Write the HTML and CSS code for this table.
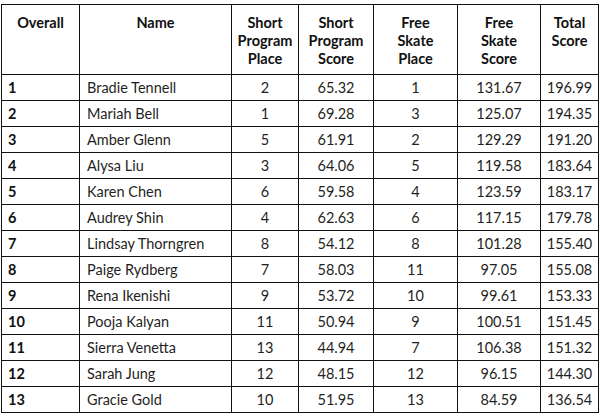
FILE: index.html
```html
<!DOCTYPE html>
<html>
<head>
<meta charset="utf-8">
<link rel="stylesheet" href="styles.css">
</head>
<body>
<table class="results">
  <colgroup>
    <col class="c1"><col class="c2"><col class="c3"><col class="c4"><col class="c5"><col class="c6"><col class="c7">
  </colgroup>
  <thead>
    <tr>
      <th>Overall</th>
      <th>Name</th>
      <th>Short<br>Program<br>Place</th>
      <th>Short<br>Program<br>Score</th>
      <th>Free<br>Skate<br>Place</th>
      <th>Free<br>Skate<br>Score</th>
      <th>Total<br>Score</th>
    </tr>
  </thead>
  <tbody>
    <tr><td class="rank">1</td><td class="name">Bradie Tennell</td><td>2</td><td>65.32</td><td>1</td><td>131.67</td><td>196.99</td></tr>
    <tr><td class="rank">2</td><td class="name">Mariah Bell</td><td>1</td><td>69.28</td><td>3</td><td>125.07</td><td>194.35</td></tr>
    <tr><td class="rank">3</td><td class="name">Amber Glenn</td><td>5</td><td>61.91</td><td>2</td><td>129.29</td><td>191.20</td></tr>
    <tr><td class="rank">4</td><td class="name">Alysa Liu</td><td>3</td><td>64.06</td><td>5</td><td>119.58</td><td>183.64</td></tr>
    <tr><td class="rank">5</td><td class="name">Karen Chen</td><td>6</td><td>59.58</td><td>4</td><td>123.59</td><td>183.17</td></tr>
    <tr><td class="rank">6</td><td class="name">Audrey Shin</td><td>4</td><td>62.63</td><td>6</td><td>117.15</td><td>179.78</td></tr>
    <tr><td class="rank">7</td><td class="name">Lindsay Thorngren</td><td>8</td><td>54.12</td><td>8</td><td>101.28</td><td>155.40</td></tr>
    <tr><td class="rank">8</td><td class="name">Paige Rydberg</td><td>7</td><td>58.03</td><td>11</td><td>97.05</td><td>155.08</td></tr>
    <tr><td class="rank">9</td><td class="name">Rena Ikenishi</td><td>9</td><td>53.72</td><td>10</td><td>99.61</td><td>153.33</td></tr>
    <tr><td class="rank">10</td><td class="name">Pooja Kalyan</td><td>11</td><td>50.94</td><td>9</td><td>100.51</td><td>151.45</td></tr>
    <tr><td class="rank">11</td><td class="name">Sierra Venetta</td><td>13</td><td>44.94</td><td>7</td><td>106.38</td><td>151.32</td></tr>
    <tr><td class="rank">12</td><td class="name">Sarah Jung</td><td>12</td><td>48.15</td><td>12</td><td>96.15</td><td>144.30</td></tr>
    <tr><td class="rank">13</td><td class="name">Gracie Gold</td><td>10</td><td>51.95</td><td>13</td><td>84.59</td><td>136.54</td></tr>
  </tbody>
</table>
</body>
</html>
```
FILE: styles.css
```css
html, body {
  margin: 0;
  padding: 0;
  background: #fff;
}
body {
  padding: 4px 0 0 1px;
  font-family: Lato, "Open Sans", sans-serif;
  color: #1f1f24;
}
.results {
  border-collapse: collapse;
  table-layout: fixed;
  width: 598px;
}
.c1 { width: 78px; }
.c2 { width: 152px; }
.c3 { width: 67px; }
.c4 { width: 75px; }
.c5 { width: 84px; }
.c6 { width: 83px; }
.c7 { width: 58px; }
.results th, .results td {
  border: 1px solid #111;
  padding: 0;
}
.results th {
  font-weight: 700;
  font-size: 14.5px;
  line-height: 18px;
  height: 70px;
  vertical-align: top;
  padding-top: 9px;
  text-align: center;
  box-sizing: border-box;
  color: #111;
}
.results td {
  height: 24px;
  font-size: 14.5px;
  text-align: center;
  vertical-align: middle;
  line-height: 18px;
  padding-top: 1px;
}
.results td.rank {
  text-align: left;
  padding-left: 6px;
  font-weight: 700;
  color: #111;
}
.results td.name {
  text-align: left;
  padding-left: 7px;
}
```
